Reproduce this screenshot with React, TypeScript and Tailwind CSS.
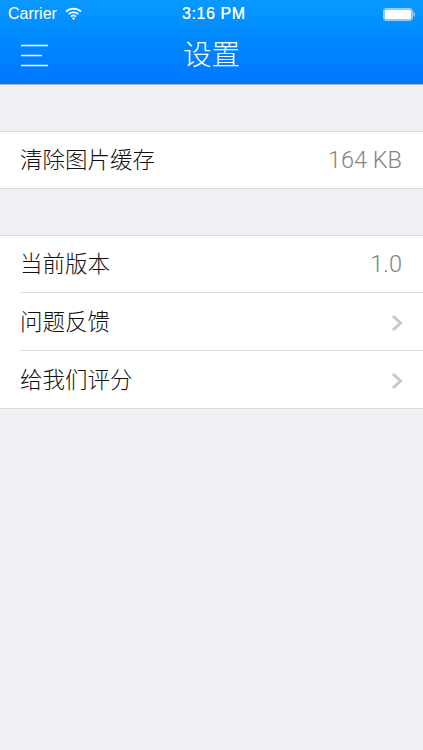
import { ReactNode } from "react";

const Row = ({
  label,
  value,
  arrow,
  last,
  height,
}: {
  label: string;
  value?: string;
  arrow?: boolean;
  last?: boolean;
  height: string;
}) => {
  return (
    <div className="pl-[20px]">
      <div
        className={`flex items-center justify-between pr-[21px] pt-[2px] ${height} ${
          last ? "" : "border-b border-[#dcdcde]"
        }`}
      >
        <span className="text-[22.5px] font-light text-[#111]">{label}</span>
        {value && (
          <span
            className="text-[23.5px] font-light text-[#838388]"
            style={{ fontFamily: 'Roboto, "Liberation Sans", sans-serif' }}
          >
            {value}
          </span>
        )}
        {arrow && (
          <svg width="12" height="18" viewBox="0 0 12 18" className="mr-[-1px]">
            <path d="M2 2l7.5 7-7.5 7" fill="none" stroke="#c7c7cc" strokeWidth="3" />
          </svg>
        )}
      </div>
    </div>
  );
};

const Group = ({ children }: { children: ReactNode }) => {
  return (
    <div className="border-y border-[#d9d9dc] bg-white">{children}</div>
  );
};

const StatusBar = () => {
  return (
    <div className="relative flex h-[28px] items-center justify-between pl-[8px] pr-[8px] text-[16px] text-white">
      <div className="flex items-center gap-[8px]">
        <span>Carrier</span>
        <svg width="17" height="13" viewBox="0 0 17 13" fill="none" stroke="white" className="mt-[-2px]">
          <path d="M1 4.6C5.3 .6 11.7 .6 16 4.6" strokeWidth="1.7" />
          <path d="M3.6 7.2C6.4 4.6 10.6 4.6 13.4 7.2" strokeWidth="1.7" />
          <path d="M6 9.6c1.4-1.3 3.6-1.3 5 0" strokeWidth="1.7" />
          <path d="M8.5 10l1.5 1.4-1.5 1.5-1.5-1.5z" fill="white" stroke="none" />
        </svg>
      </div>
      <span className="absolute left-[182px] tracking-[0.6px] [text-shadow:0_0_0.5px_white]">3:16 PM</span>
      <svg width="32" height="13" viewBox="0 0 32 13">
        <rect x="0.5" y="0.5" width="29" height="12" rx="2.5" fill="none" stroke="#8fd0ff" />
        <rect x="1.5" y="1.5" width="27" height="10" rx="1.5" fill="white" />
        <rect x="30.5" y="4.5" width="1.5" height="4" fill="#8fd0ff" />
      </svg>
    </div>
  );
};

export default function App() {
  return (
    <div
      className="flex h-[750px] w-full flex-col overflow-hidden bg-[#efeff4]"
      style={{ fontFamily: '"Liberation Sans", "Noto Sans CJK SC", sans-serif' }}
    >
      <div className="h-[85px] border-b border-[#a9b4c4] bg-gradient-to-b from-[#0a99ff] to-[#0076ff]">
        <StatusBar />
        <div className="relative flex h-[56px] items-center justify-center pb-[1px]">
          <svg
            width="28"
            height="24"
            viewBox="0 0 28 24"
            className="absolute left-[20px] top-[16px]"
            stroke="white"
            strokeWidth="1.4"
          >
            <path d="M1 1.5h27M1 11.5h21M1 21.5h27" />
          </svg>
          <span className="text-[28.5px] font-light text-white">设置</span>
        </div>
      </div>
      <div className="mt-[46px]">
        <Group>
          <Row label="清除图片缓存" value="164 KB" last height="h-[56px]" />
        </Group>
      </div>
      <div className="mt-[46px]">
        <Group>
          <Row label="当前版本" value="1.0" height="h-[57px]" />
          <Row label="问题反馈" arrow height="h-[58px]" />
          <Row label="给我们评分" arrow last height="h-[57px]" />
        </Group>
      </div>
    </div>
  );
}
